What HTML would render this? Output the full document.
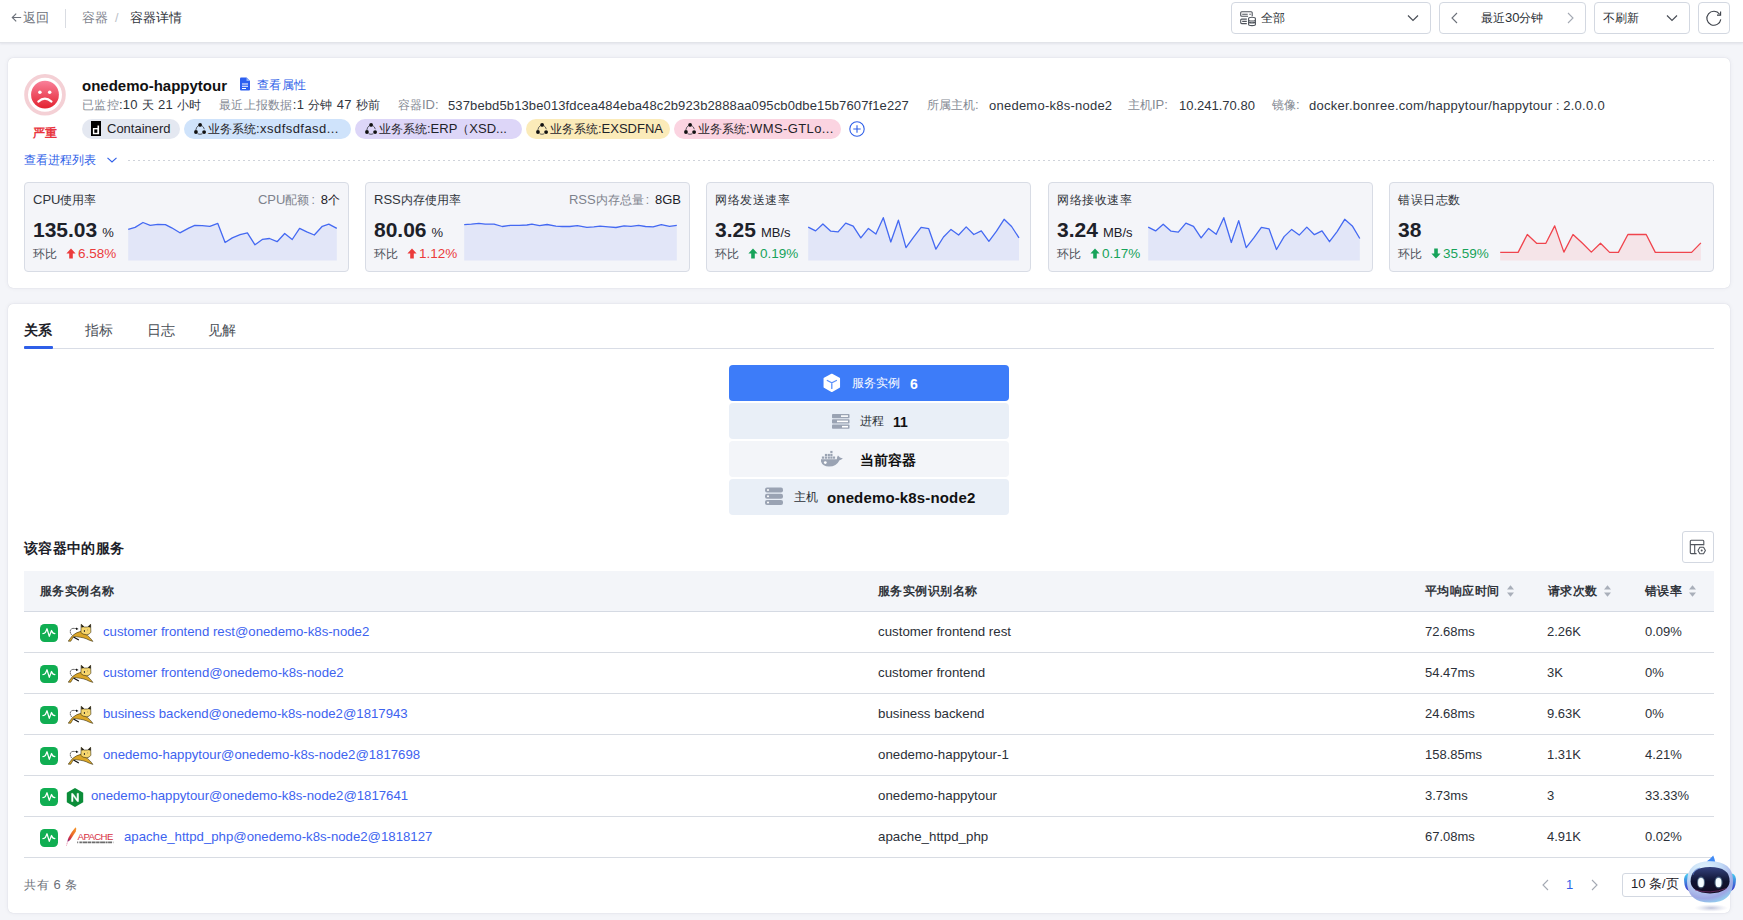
<!DOCTYPE html>
<html><head><meta charset="utf-8">
<style>
*{box-sizing:border-box;margin:0;padding:0}
html,body{width:1743px;height:920px;overflow:hidden}
body{background:#f4f5f9;font-family:"Liberation Sans",sans-serif;color:#1d2129;position:relative;font-size:12px}
.a{position:absolute;white-space:nowrap}
.hdr{position:absolute;left:0;top:0;width:1743px;height:43px;background:#fff;box-shadow:0 1px 2px rgba(20,30,60,.08);border-bottom:1px solid #e2e4e9}
.box{position:absolute;border:1px solid #d3d8e1;border-radius:4px;background:#fff;height:32px;top:2px}
.card{position:absolute;left:8px;width:1722px;background:#fff;border-radius:5px;box-shadow:0 0 1px rgba(30,40,70,.2),0 0 5px rgba(30,40,70,.06)}
.tag{position:absolute;top:119px;height:20px;border-radius:10px;font-size:13px;line-height:20px;color:#1f2329}
.mc{position:absolute;top:182px;width:325px;height:90px;border:1px solid #d8dce5;border-radius:4px;background:#f4f5f9}
</style></head>
<body>
<div class="hdr">
<svg class="a" style="left:11px;top:12px" width="11" height="11" viewBox="0 0 11 11"><path d="M10.2 5.5H1.3M5.2 1.6 1.3 5.5 5.2 9.4" fill="none" stroke="#6b7079" stroke-width="1.15"/></svg>
<div class="a" style="left:23px;top:12px;font-size:12.5px;line-height:12.5px;color:#6b7079">返回</div>
<div class="a" style="left:65px;top:9px;width:1px;height:19px;background:#d9dce2"></div>
<div class="a" style="left:82px;top:12px;font-size:12.5px;line-height:12.5px;color:#7d828c">容器</div>
<div class="a" style="left:115px;top:12px;font-size:12.5px;line-height:12.5px;color:#b9bec7">/</div>
<div class="a" style="left:130px;top:12px;font-size:12.5px;line-height:12.5px;color:#30343b">容器详情</div>
<div class="box" style="left:1231px;width:200px"></div>
<div class="box" style="left:1439px;width:147px"></div>
<div class="box" style="left:1594px;width:96px"></div>
<div class="box" style="left:1698px;width:32px"></div>
<svg class="a" style="left:1240px;top:11px" width="17" height="16" viewBox="0 0 17 16"><g fill="none" stroke="#4f545c" stroke-width="1.1"><path d="M12.2 5.2V1.8Q12.2 .7 11.1 .7H1.7Q.7 .7 .7 1.8V4.2Q.7 5.2 1.7 5.2H8"/><path d="M2.2 3.3H7.7M9.4 3.3H10.8"/><path d="M6.8 8.1H1.7Q.7 8.1 .7 9.1V11.6Q.7 12.6 1.7 12.6H6.8M2.2 10.4H6.8"/><path d="M8.6 7.4Q8.6 6.3 12 6.3T15.4 7.4V13.5Q15.4 14.6 12 14.6T8.6 13.5Z"/><path d="M8.6 9.4Q12 10.6 15.4 9.4M8.6 11.4Q12 12.4 15.4 11.4"/></g></svg>
<div class="a" style="left:1261px;top:12px;font-size:12px;line-height:12px;color:#2b2f36">全部</div>
<svg class="a" style="left:1407px;top:14px" width="12" height="8" viewBox="0 0 12 8"><path d="M1 1.5 6 6.5 11 1.5" fill="none" stroke="#4a4f57" stroke-width="1.2"/></svg>
<svg class="a" style="left:1450px;top:12px" width="9" height="12" viewBox="0 0 9 12"><path d="M7 1 2 6 7 11" fill="none" stroke="#6b7079" stroke-width="1.1"/></svg>
<div class="a" style="left:1481px;top:12px;font-size:12px;line-height:12px;color:#2b2f36">最近<span style="font-size:13px">30</span>分钟</div>
<svg class="a" style="left:1566px;top:12px" width="9" height="12" viewBox="0 0 9 12"><path d="M2 1 7 6 2 11" fill="none" stroke="#a4a9b3" stroke-width="1.1"/></svg>
<div class="a" style="left:1603px;top:12px;font-size:12px;line-height:12px;color:#2b2f36">不刷新</div>
<svg class="a" style="left:1666px;top:14px" width="12" height="8" viewBox="0 0 12 8"><path d="M1 1.5 6 6.5 11 1.5" fill="none" stroke="#4a4f57" stroke-width="1.2"/></svg>
<svg class="a" style="left:1705px;top:10px" width="18" height="17" viewBox="0 0 18 17"><path d="M14.6 4.2A7 7 0 1 0 15.8 9.3" fill="none" stroke="#3a3f47" stroke-width="1.1"/><path d="M15.6 1.5V5.1H12" fill="none" stroke="#3a3f47" stroke-width="1.1"/></svg>
</div>
<div class="card" style="top:58px;height:230px"></div>
<div class="card" style="top:304px;height:609px"></div>
<svg class="a" style="left:23px;top:73px" width="44" height="44" viewBox="0 0 44 44">
 <defs><linearGradient id="rg" x1="0" y1="0" x2="0" y2="1"><stop offset="0" stop-color="#f9809a"/><stop offset="1" stop-color="#e3222f"/></linearGradient></defs>
 <circle cx="22" cy="21.7" r="18.9" fill="#fff" stroke="#f4d0d5" stroke-width="3.8"/>
 <circle cx="22" cy="21.7" r="13.9" fill="url(#rg)"/>
 <circle cx="16.9" cy="19.3" r="1.75" fill="#fff"/><circle cx="26.7" cy="19.3" r="1.75" fill="#fff"/>
 <path d="M15.3 28.6Q21.9 22.6 28.5 28.6" fill="none" stroke="#fff" stroke-width="2.1" stroke-linecap="round"/>
</svg>
<div class="a" style="left:33px;top:127px;font-size:12px;line-height:12px;color:#e8363f;font-weight:bold">严重</div>
<div class="a" style="left:82px;top:78px;font-size:15px;line-height:15px;color:#111;font-weight:bold">onedemo-happytour</div>
<svg class="a" style="left:239px;top:77px" width="12" height="14" viewBox="0 0 12 14"><path d="M1 1.5Q1 .5 2 .5H7.5L11 4V12.5Q11 13.5 10 13.5H2Q1 13.5 1 12.5Z" fill="#2c5ff0"/><path d="M7.5 .5V4H11" fill="#8fb0fa"/><path d="M3 7H9M3 9.3H9M3 11.5H7" stroke="#fff" stroke-width="1.1"/></svg>
<div class="a" style="left:257px;top:79px;font-size:12px;line-height:12px;color:#2f5fe8;letter-spacing:0.3px">查看属性</div>
<div class="a" style="left:82px;top:99px;font-size:12px;line-height:12px;color:#30353d;letter-spacing:0.3px"><span style="color:#858a94">已监控</span><span style="font-size:13px">:10 </span>天<span style="font-size:13px"> 21 </span>小时</div>
<div class="a" style="left:219px;top:99px;font-size:12px;line-height:12px;color:#30353d;letter-spacing:0.3px"><span style="color:#858a94">最近上报数据</span><span style="font-size:13px">:1 </span>分钟<span style="font-size:13px"> 47 </span>秒前</div>
<div class="a" style="left:398px;top:99px;font-size:12px;line-height:12px;color:#858a94">容器<span style="font-size:13px">ID:</span></div>
<div class="a" style="left:448px;top:99px;font-size:13px;line-height:13px;color:#30353d;letter-spacing:0.12px">537bebd5b13be013fdcea484eba48c2b923b2888aa095cb0dbe15b7607f1e227</div>
<div class="a" style="left:927px;top:99px;font-size:12px;line-height:12px;color:#858a94">所属主机<span style="font-size:13px">:</span></div>
<div class="a" style="left:989px;top:99px;font-size:13px;line-height:13px;color:#30353d;letter-spacing:0.24px">onedemo-k8s-node2</div>
<div class="a" style="left:1128px;top:99px;font-size:12px;line-height:12px;color:#858a94">主机<span style="font-size:13px">IP:</span></div>
<div class="a" style="left:1179px;top:99px;font-size:13px;line-height:13px;color:#30353d">10.241.70.80</div>
<div class="a" style="left:1272px;top:99px;font-size:12px;line-height:12px;color:#858a94">镜像<span style="font-size:13px">:</span></div>
<div class="a" style="left:1309px;top:99px;font-size:13px;line-height:13px;color:#30353d;letter-spacing:0.27px">docker.bonree.com/happytour/happytour<span style="font-size:12px"> : </span>2.0.0.0</div>
<div class="tag" style="left:82px;width:98px;background:#e4e8f1;padding-left:25px">Containerd</div>
<svg class="a" style="left:91px;top:121px" width="10" height="15" viewBox="0 0 10 15"><rect width="10" height="15" fill="#000"/><path d="M6.5 4.4H8.1V13.3H1.9V7H6.5Z" fill="#fff"/><rect x="3.3" y="8.4" width="3" height="3.4" fill="#000"/></svg>
<div class="tag" style="left:184px;width:167px;background:#cfe3fb;padding-left:24px;font-size:12px">业务系统<span style="font-size:13px;letter-spacing:0.45px">:xsdfsdfasd...</span></div>
<svg class="a" style="left:194px;top:122px" width="13" height="13" viewBox="0 0 13 13"><g fill="none" stroke="#2a2f37" stroke-width=".85" opacity=".85"><path d="M4.6 3.4Q2.4 4.6 1.8 8"/><path d="M7.8 3.6Q9.6 4.5 10.3 7.2"/><path d="M3.7 11.8Q6 12.8 8.3 11.8"/></g><circle cx="6.1" cy="2.9" r="1.9" fill="#111"/><circle cx="1.95" cy="10" r="1.9" fill="#111"/><circle cx="10.1" cy="10.1" r="1.9" fill="#111"/></svg>
<div class="tag" style="left:355px;width:167px;background:#ddd6f8;padding-left:24px;font-size:12px">业务系统<span style="font-size:13px;letter-spacing:0px">:ERP<span style="font-size:12px">（</span>XSD...</span></div>
<svg class="a" style="left:365px;top:122px" width="13" height="13" viewBox="0 0 13 13"><g fill="none" stroke="#2a2f37" stroke-width=".85" opacity=".85"><path d="M4.6 3.4Q2.4 4.6 1.8 8"/><path d="M7.8 3.6Q9.6 4.5 10.3 7.2"/><path d="M3.7 11.8Q6 12.8 8.3 11.8"/></g><circle cx="6.1" cy="2.9" r="1.9" fill="#111"/><circle cx="1.95" cy="10" r="1.9" fill="#111"/><circle cx="10.1" cy="10.1" r="1.9" fill="#111"/></svg>
<div class="tag" style="left:526px;width:144px;background:#fbebb9;padding-left:24px;font-size:12px">业务系统<span style="font-size:13px;letter-spacing:0px">:EXSDFNA</span></div>
<svg class="a" style="left:536px;top:122px" width="13" height="13" viewBox="0 0 13 13"><g fill="none" stroke="#2a2f37" stroke-width=".85" opacity=".85"><path d="M4.6 3.4Q2.4 4.6 1.8 8"/><path d="M7.8 3.6Q9.6 4.5 10.3 7.2"/><path d="M3.7 11.8Q6 12.8 8.3 11.8"/></g><circle cx="6.1" cy="2.9" r="1.9" fill="#111"/><circle cx="1.95" cy="10" r="1.9" fill="#111"/><circle cx="10.1" cy="10.1" r="1.9" fill="#111"/></svg>
<div class="tag" style="left:674px;width:167px;background:#fbd4e1;padding-left:24px;font-size:12px">业务系统<span style="font-size:13px;letter-spacing:0.4px">:WMS-GTLo...</span></div>
<svg class="a" style="left:684px;top:122px" width="13" height="13" viewBox="0 0 13 13"><g fill="none" stroke="#2a2f37" stroke-width=".85" opacity=".85"><path d="M4.6 3.4Q2.4 4.6 1.8 8"/><path d="M7.8 3.6Q9.6 4.5 10.3 7.2"/><path d="M3.7 11.8Q6 12.8 8.3 11.8"/></g><circle cx="6.1" cy="2.9" r="1.9" fill="#111"/><circle cx="1.95" cy="10" r="1.9" fill="#111"/><circle cx="10.1" cy="10.1" r="1.9" fill="#111"/></svg>
<svg class="a" style="left:849px;top:121px" width="16" height="16" viewBox="0 0 16 16"><circle cx="8" cy="8" r="7.2" fill="none" stroke="#2f5fe8" stroke-width="1.1"/><path d="M8 4.3V11.7M4.3 8H11.7" stroke="#2f5fe8" stroke-width="1.1"/></svg>
<div class="a" style="left:24px;top:154px;font-size:12px;line-height:12px;color:#2f5fe8">查看进程列表</div>
<svg class="a" style="left:106px;top:155px" width="12" height="10" viewBox="0 0 12 10"><path d="M1.5 2.8 6 7 10.5 2.8" fill="none" stroke="#2f5fe8" stroke-width="1.1"/></svg>
<div class="a" style="left:128px;top:160px;width:1586px;height:1px;background:repeating-linear-gradient(90deg,#cfd3da 0 2px,transparent 2px 5px)"></div>
<div class="mc" style="left:24px"></div>
<div class="a" style="left:33px;top:194px;font-size:12px;line-height:12px;color:#30343b"><span style="font-size:13px">CPU</span>使用率</div>
<div class="a" style="left:32px;top:194px;font-size:12px;line-height:12px;color:#7d828c;left:auto;right:1403px"><span style="font-size:13px">CPU</span>配额<span style="margin:0 6px 0 2px">:</span><span style="color:#1d2129"><span style="font-size:13px">8</span>个</span></div>
<div class="a" style="left:33px;top:219px;font-size:21px;line-height:21px;color:#1d2129;font-weight:bold">135.03<span style="font-size:13px;font-weight:normal;margin-left:5px">%</span></div>
<div class="a" style="left:33px;top:248px;font-size:12px;line-height:12px;color:#4a4f57">环比</div>
<svg class="a" style="left:66px;top:248px" width="10" height="11" viewBox="0 0 10 11"><path d="M3.2 10.5H6.8V5.4H9.6L5 .4.4 5.4H3.2Z" fill="#eb3b3b"/></svg>
<div class="a" style="left:78px;top:247px;font-size:13.5px;line-height:13.5px;color:#eb3b3b">6.58%</div>
<div class="mc" style="left:365px"></div>
<div class="a" style="left:374px;top:194px;font-size:12px;line-height:12px;color:#30343b"><span style="font-size:13px">RSS</span>内存使用率</div>
<div class="a" style="left:373px;top:194px;font-size:12px;line-height:12px;color:#7d828c;left:auto;right:1062px"><span style="font-size:13px">RSS</span>内存总量<span style="margin:0 6px 0 2px">:</span><span style="color:#1d2129"><span style="font-size:13px">8</span><span style="font-size:13px">GB</span></span></div>
<div class="a" style="left:374px;top:219px;font-size:21px;line-height:21px;color:#1d2129;font-weight:bold">80.06<span style="font-size:13px;font-weight:normal;margin-left:5px">%</span></div>
<div class="a" style="left:374px;top:248px;font-size:12px;line-height:12px;color:#4a4f57">环比</div>
<svg class="a" style="left:407px;top:248px" width="10" height="11" viewBox="0 0 10 11"><path d="M3.2 10.5H6.8V5.4H9.6L5 .4.4 5.4H3.2Z" fill="#eb3b3b"/></svg>
<div class="a" style="left:419px;top:247px;font-size:13.5px;line-height:13.5px;color:#eb3b3b">1.12%</div>
<div class="mc" style="left:706px"></div>
<div class="a" style="left:715px;top:194px;font-size:12px;line-height:12px;color:#30343b;letter-spacing:0.6px">网络发送速率</div>
<div class="a" style="left:715px;top:219px;font-size:21px;line-height:21px;color:#1d2129;font-weight:bold">3.25<span style="font-size:13px;font-weight:normal;margin-left:5px">MB/s</span></div>
<div class="a" style="left:715px;top:248px;font-size:12px;line-height:12px;color:#4a4f57">环比</div>
<svg class="a" style="left:748px;top:248px" width="10" height="11" viewBox="0 0 10 11"><path d="M3.2 10.5H6.8V5.4H9.6L5 .4.4 5.4H3.2Z" fill="#17a35a"/></svg>
<div class="a" style="left:760px;top:247px;font-size:13.5px;line-height:13.5px;color:#17a35a">0.19%</div>
<div class="mc" style="left:1048px"></div>
<div class="a" style="left:1057px;top:194px;font-size:12px;line-height:12px;color:#30343b;letter-spacing:0.6px">网络接收速率</div>
<div class="a" style="left:1057px;top:219px;font-size:21px;line-height:21px;color:#1d2129;font-weight:bold">3.24<span style="font-size:13px;font-weight:normal;margin-left:5px">MB/s</span></div>
<div class="a" style="left:1057px;top:248px;font-size:12px;line-height:12px;color:#4a4f57">环比</div>
<svg class="a" style="left:1090px;top:248px" width="10" height="11" viewBox="0 0 10 11"><path d="M3.2 10.5H6.8V5.4H9.6L5 .4.4 5.4H3.2Z" fill="#17a35a"/></svg>
<div class="a" style="left:1102px;top:247px;font-size:13.5px;line-height:13.5px;color:#17a35a">0.17%</div>
<div class="mc" style="left:1389px"></div>
<div class="a" style="left:1398px;top:194px;font-size:12px;line-height:12px;color:#30343b;letter-spacing:0.6px">错误日志数</div>
<div class="a" style="left:1398px;top:219px;font-size:21px;line-height:21px;color:#1d2129;font-weight:bold">38</div>
<div class="a" style="left:1398px;top:248px;font-size:12px;line-height:12px;color:#4a4f57">环比</div>
<svg class="a" style="left:1431px;top:248px" width="10" height="11" viewBox="0 0 10 11"><path d="M3.2 .5H6.8V5.6H9.6L5 10.6.4 5.6H3.2Z" fill="#17a35a"/></svg>
<div class="a" style="left:1443px;top:247px;font-size:13.5px;line-height:13.5px;color:#17a35a">35.59%</div>
<svg class="a" style="left:0;top:0" width="1743" height="300" viewBox="0 0 1743 300">
<path d="M128.2 229.4 L135.1 227.4 L143.0 222.5 L150.2 225.3 L157.8 224.4 L165.4 224.6 L171.7 227.8 L179.9 232.8 L188.7 228.2 L194.8 225.3 L202.2 225.6 L209.8 226.3 L217.8 223.4 L225.1 242.5 L232.3 237.9 L240.1 234.7 L247.4 232.8 L255.0 244.8 L262.3 239.4 L269.5 238.5 L277.1 241.7 L284.7 233.5 L292.2 239.5 L299.6 228.4 L306.8 231.9 L314.3 235.0 L322.3 226.3 L328.8 224.2 L336.8 228.4 L336.8 260.6 L128.2 260.6 Z" fill="#e2e6f8"/><path d="M128.2 229.4 L135.1 227.4 L143.0 222.5 L150.2 225.3 L157.8 224.4 L165.4 224.6 L171.7 227.8 L179.9 232.8 L188.7 228.2 L194.8 225.3 L202.2 225.6 L209.8 226.3 L217.8 223.4 L225.1 242.5 L232.3 237.9 L240.1 234.7 L247.4 232.8 L255.0 244.8 L262.3 239.4 L269.5 238.5 L277.1 241.7 L284.7 233.5 L292.2 239.5 L299.6 228.4 L306.8 231.9 L314.3 235.0 L322.3 226.3 L328.8 224.2 L336.8 228.4" fill="none" stroke="#4469f2" stroke-width="1.3" stroke-linejoin="round"/>
<path d="M464.2 224.6 L471.4 224.2 L478.9 223.4 L485.2 224.1 L494.1 224.1 L502.3 226.5 L510.5 225.4 L519.3 225.4 L526.9 225.0 L531.9 224.1 L539.5 225.6 L547.1 224.5 L555.9 226.1 L562.2 226.5 L569.8 226.5 L577.4 225.6 L586.9 227.4 L593.8 226.9 L600.1 226.1 L608.3 226.9 L615.9 227.5 L624.1 225.9 L631.0 226.3 L638.6 225.3 L645.5 226.5 L653.1 226.9 L661.3 224.6 L669.5 226.3 L676.8 225.3 L676.8 260.6 L464.2 260.6 Z" fill="#e2e6f8"/><path d="M464.2 224.6 L471.4 224.2 L478.9 223.4 L485.2 224.1 L494.1 224.1 L502.3 226.5 L510.5 225.4 L519.3 225.4 L526.9 225.0 L531.9 224.1 L539.5 225.6 L547.1 224.5 L555.9 226.1 L562.2 226.5 L569.8 226.5 L577.4 225.6 L586.9 227.4 L593.8 226.9 L600.1 226.1 L608.3 226.9 L615.9 227.5 L624.1 225.9 L631.0 226.3 L638.6 225.3 L645.5 226.5 L653.1 226.9 L661.3 224.6 L669.5 226.3 L676.8 225.3" fill="none" stroke="#4469f2" stroke-width="1.3" stroke-linejoin="round"/>
<path d="M808.2 227.1 L815.6 230.9 L822.9 224.0 L830.8 231.2 L838.1 231.9 L845.7 223.1 L853.2 226.1 L860.8 237.9 L868.4 228.4 L875.9 234.1 L883.3 217.7 L890.8 242.0 L898.4 220.2 L906.0 247.6 L913.6 237.2 L921.1 227.4 L928.7 228.7 L935.9 249.2 L943.5 237.0 L951.0 229.4 L958.6 235.0 L966.2 226.9 L973.8 234.5 L981.3 230.9 L988.9 241.3 L996.5 231.2 L1004.1 219.3 L1011.6 226.5 L1019.0 237.9 L1019.0 260.6 L808.2 260.6 Z" fill="#e2e6f8"/><path d="M808.2 227.1 L815.6 230.9 L822.9 224.0 L830.8 231.2 L838.1 231.9 L845.7 223.1 L853.2 226.1 L860.8 237.9 L868.4 228.4 L875.9 234.1 L883.3 217.7 L890.8 242.0 L898.4 220.2 L906.0 247.6 L913.6 237.2 L921.1 227.4 L928.7 228.7 L935.9 249.2 L943.5 237.0 L951.0 229.4 L958.6 235.0 L966.2 226.9 L973.8 234.5 L981.3 230.9 L988.9 241.3 L996.5 231.2 L1004.1 219.3 L1011.6 226.5 L1019.0 237.9" fill="none" stroke="#4469f2" stroke-width="1.3" stroke-linejoin="round"/>
<path d="M1148.2 227.1 L1155.6 230.9 L1163.2 224.2 L1171.1 231.2 L1178.3 232.2 L1185.9 223.1 L1193.5 226.3 L1201.1 237.9 L1208.6 228.4 L1216.2 234.3 L1223.8 217.7 L1231.3 242.5 L1238.7 220.6 L1246.2 247.7 L1253.8 237.9 L1261.4 227.4 L1269.0 228.8 L1276.5 249.5 L1284.1 236.6 L1291.7 229.4 L1299.2 235.1 L1306.8 227.1 L1314.4 234.7 L1322.0 230.9 L1329.5 241.7 L1337.1 231.6 L1344.7 219.3 L1352.3 225.9 L1359.8 238.5 L1359.8 260.6 L1148.2 260.6 Z" fill="#e2e6f8"/><path d="M1148.2 227.1 L1155.6 230.9 L1163.2 224.2 L1171.1 231.2 L1178.3 232.2 L1185.9 223.1 L1193.5 226.3 L1201.1 237.9 L1208.6 228.4 L1216.2 234.3 L1223.8 217.7 L1231.3 242.5 L1238.7 220.6 L1246.2 247.7 L1253.8 237.9 L1261.4 227.4 L1269.0 228.8 L1276.5 249.5 L1284.1 236.6 L1291.7 229.4 L1299.2 235.1 L1306.8 227.1 L1314.4 234.7 L1322.0 230.9 L1329.5 241.7 L1337.1 231.6 L1344.7 219.3 L1352.3 225.9 L1359.8 238.5" fill="none" stroke="#4469f2" stroke-width="1.3" stroke-linejoin="round"/>
<path d="M1500.2 252.4 L1518.1 252.4 L1527.3 234.5 L1536.6 243.3 L1545.9 243.3 L1554.7 225.9 L1563.9 252.1 L1573.0 234.5 L1582.5 243.3 L1591.3 252.1 L1600.5 243.3 L1609.6 252.4 L1618.4 252.4 L1627.9 234.5 L1646.2 234.5 L1655.3 252.4 L1691.6 252.4 L1700.9 242.9 L1700.9 260.6 L1500.2 260.6 Z" fill="#f5e4e8"/><path d="M1500.2 252.4 L1518.1 252.4 L1527.3 234.5 L1536.6 243.3 L1545.9 243.3 L1554.7 225.9 L1563.9 252.1 L1573.0 234.5 L1582.5 243.3 L1591.3 252.1 L1600.5 243.3 L1609.6 252.4 L1618.4 252.4 L1627.9 234.5 L1646.2 234.5 L1655.3 252.4 L1691.6 252.4 L1700.9 242.9" fill="none" stroke="#f0444d" stroke-width="1.3" stroke-linejoin="round"/>
</svg><div class="a" style="left:24px;top:323px;font-size:14px;line-height:14px;color:#1d2129;font-weight:bold">关系</div>
<div class="a" style="left:85px;top:323px;font-size:14px;line-height:14px;color:#4a4f57">指标</div>
<div class="a" style="left:147px;top:323px;font-size:14px;line-height:14px;color:#4a4f57">日志</div>
<div class="a" style="left:208px;top:323px;font-size:14px;line-height:14px;color:#4a4f57">见解</div>
<div class="a" style="left:24px;top:348px;width:1690px;height:1px;background:#d9dde6"></div>
<div class="a" style="left:24px;top:346px;width:29px;height:3px;background:#2f5fe8;border-radius:1px"></div>
<div class="a" style="left:729px;top:365px;width:280px;height:36px;background:#3d7cf9;border-radius:4px"></div>
<div class="a" style="left:729px;top:403px;width:280px;height:36px;background:#e9eff7;border-radius:4px"></div>
<div class="a" style="left:729px;top:441px;width:280px;height:36px;background:#f3f5f9;border-radius:4px"></div>
<div class="a" style="left:729px;top:479px;width:280px;height:36px;background:#e9eff7;border-radius:4px"></div>
<svg class="a" style="left:823px;top:373px" width="18" height="20" viewBox="0 0 18 20"><path d="M8.8 1.5 16.2 5.6V14.1L8.8 18.2 1.4 14.1V5.6Z" fill="#fff" stroke="#fff" stroke-linejoin="round" stroke-width="1.7"/><path d="M4.3 7.5 8.8 9.8 13.4 7.5M8.8 9.8V15.4" fill="none" stroke="#3d7cf9" stroke-width="1.3" stroke-linecap="round" opacity=".85"/></svg>
<div class="a" style="left:852px;top:377px;font-size:12px;line-height:12px;color:#fff">服务实例</div>
<div class="a" style="left:910px;top:377px;font-size:14px;line-height:14px;color:#fff;font-weight:bold">6</div>
<svg class="a" style="left:832px;top:414px" width="18" height="15" viewBox="0 0 18 15"><g fill="#9aa3b3"><rect x="0" y="0" width="17.5" height="4.2" rx=".8"/><rect x="0" y="5.3" width="17.5" height="4.2" rx=".8"/><rect x="0" y="10.6" width="17.5" height="4.2" rx=".8"/></g><g fill="#fff"><rect x="9" y="1.3" width="7" height="1.6"/><rect x="5" y="6.6" width="11" height="1.6"/><rect x="10" y="11.9" width="6" height="1.6"/></g></svg>
<div class="a" style="left:860px;top:415px;font-size:12px;line-height:12px;color:#2b2f36">进程</div>
<div class="a" style="left:893px;top:415px;font-size:14px;line-height:14px;color:#111;font-weight:bold">11</div>
<svg class="a" style="left:820px;top:450px" width="24" height="18" viewBox="0 0 24 18"><g fill="#9aa3b3"><path d="M1 9.3H16.8Q17 6.5 18 5.4Q19.5 7.6 22.9 8.5Q20.6 10 19.5 10.3Q16.5 16.6 9 16.6Q2.6 16.6 1 11.5Z"/><rect x="10.3" y="0.9" width="2.2" height="2.2"/><rect x="4.9" y="3.9" width="2.2" height="2.2"/><rect x="7.7" y="3.9" width="2.2" height="2.2"/><rect x="10.3" y="3.9" width="2.2" height="2.2"/><rect x="1.9" y="6.5" width="2.2" height="2.2"/><rect x="4.8" y="6.5" width="2.2" height="2.2"/><rect x="7.7" y="6.5" width="2.2" height="2.2"/><rect x="10.3" y="6.5" width="2.2" height="2.2"/><rect x="12.9" y="6.5" width="2.2" height="2.2"/></g><circle cx="5.3" cy="12.6" r="1.4" fill="#fff"/></svg>
<div class="a" style="left:860px;top:453px;font-size:14px;line-height:14px;color:#111;font-weight:bold">当前容器</div>
<svg class="a" style="left:765px;top:487px" width="19" height="19" viewBox="0 0 19 19"><g fill="#9aa3b3"><rect x="0" y=".5" width="18" height="5" rx="2"/><rect x="0" y="6.8" width="18" height="5" rx="2"/><rect x="0" y="13.1" width="18" height="5" rx="2"/></g><g fill="#fff"><circle cx="3" cy="3" r="1"/><circle cx="3" cy="9.3" r="1"/><circle cx="3" cy="15.6" r="1"/></g></svg>
<div class="a" style="left:794px;top:491px;font-size:12px;line-height:12px;color:#2b2f36">主机</div>
<div class="a" style="left:827px;top:490px;font-size:15px;line-height:15px;color:#111;font-weight:bold;letter-spacing:0.15px">onedemo-k8s-node2</div>
<div class="a" style="left:24px;top:541px;font-size:14px;line-height:14px;color:#1d2129;font-weight:bold;letter-spacing:0.35px">该容器中的服务</div>
<div class="a" style="left:1682px;top:531px;width:32px;height:32px;border:1px solid #d3d8e1;border-radius:3px;background:#fff"></div>
<svg class="a" style="left:1689px;top:539px" width="18" height="17" viewBox="0 0 18 17"><g fill="none" stroke="#4f545c" stroke-width="1.1" stroke-linejoin="round"><path d="M14.8 6.2V2.2Q14.8 1.2 13.8 1.2H2.3Q1.3 1.2 1.3 2.2V13.6Q1.3 14.6 2.3 14.6H7.6"/><path d="M1.3 5.6H14.8M5.7 5.6V14.6"/><path d="M16.4 11.5 14.55 14.7H10.85L9 11.5 10.85 8.3H14.55Z"/></g><circle cx="12.7" cy="11.5" r="1" fill="#4f545c"/></svg>
<div class="a" style="left:24px;top:571px;width:1690px;height:41px;background:#f3f5f9;border-bottom:1px solid #d5dae3"></div>
<div class="a" style="left:40px;top:585px;font-size:12px;line-height:12px;color:#30343b;font-weight:bold;letter-spacing:0.45px">服务实例名称</div>
<div class="a" style="left:878px;top:585px;font-size:12px;line-height:12px;color:#30343b;font-weight:bold;letter-spacing:0.45px">服务实例识别名称</div>
<div class="a" style="left:1425px;top:585px;font-size:12px;line-height:12px;color:#30343b;font-weight:bold;letter-spacing:0.45px">平均响应时间</div>
<div class="a" style="left:1548px;top:585px;font-size:12px;line-height:12px;color:#30343b;font-weight:bold;letter-spacing:0.45px">请求次数</div>
<div class="a" style="left:1645px;top:585px;font-size:12px;line-height:12px;color:#30343b;font-weight:bold;letter-spacing:0.45px">错误率</div>
<svg class="a" style="left:1506px;top:584px" width="9" height="14" viewBox="0 0 9 14"><path d="M4.5 1.2 8 5.6H1Z M4.5 12.8 8 8.4H1Z" fill="#a9afba"/></svg>
<svg class="a" style="left:1603px;top:584px" width="9" height="14" viewBox="0 0 9 14"><path d="M4.5 1.2 8 5.6H1Z M4.5 12.8 8 8.4H1Z" fill="#a9afba"/></svg>
<svg class="a" style="left:1688px;top:584px" width="9" height="14" viewBox="0 0 9 14"><path d="M4.5 1.2 8 5.6H1Z M4.5 12.8 8 8.4H1Z" fill="#a9afba"/></svg>
<div class="a" style="left:24px;top:652px;width:1690px;height:1px;background:#d8dce3"></div>
<svg class="a" style="left:40px;top:624px" width="18" height="18" viewBox="0 0 18 18"><rect width="18" height="18" rx="4.5" fill="#10ae52"/><path d="M2.9 9.6Q4.6 9.6 5.4 8.4L7 4.7 9.3 12.4 11.5 6.5Q12.4 9.6 14.9 9.6" fill="none" stroke="#fff" stroke-width="1.25" stroke-linejoin="round" stroke-linecap="round"/></svg>
<svg class="a" style="left:68px;top:623px" width="26" height="20" viewBox="0 0 26 20"><path d="M3.7 11.9Q1.6 9.5 2.6 6.8Q3.5 5.2 6 5.4L8.6 5.6" fill="none" stroke="#222" stroke-width=".8" stroke-dasharray="1.4 .5"/><path d="M8 4.6 10.6 6 8 6.9Z" fill="#111"/><path d="M5.9 14.3 10.4 16.8" stroke="#111" stroke-width="1.3" stroke-linecap="round"/><path d="M.2 18.2 4.5 12.5Q8 9.5 13.3 8.1L19.5 12.4Q22.5 15 24.9 18.4Q21 17.3 18.3 15.8Q15 14.5 12.4 14.3Q8 13.5 5.5 13.6L2.8 18.2Z" fill="#dba628" stroke="#2a2206" stroke-width=".55"/><path d="M12.9 9.5 13.2 1.2 16.3 4H19.8L22.6 1.2 22.9 9.2Q21.5 11.8 18.3 11.8Q14.5 11.5 12.9 9.5Z" fill="#f6d66e" stroke="#2a2206" stroke-width=".55"/><path d="M13.2 1.2 16.3 4 13.4 4.6ZM22.6 1.2 19.8 4 22.8 4.5Z" fill="#1a1a1a"/><ellipse cx="16.4" cy="7.9" rx=".6" ry="1" fill="#222"/><circle cx="19.7" cy="6.9" r=".45" fill="#444"/></svg>
<div class="a" style="left:103px;top:625px;font-size:13.2px;line-height:13.2px;color:#3d63ef">customer frontend rest@onedemo-k8s-node2</div>
<div class="a" style="left:878px;top:625px;font-size:13.3px;line-height:13.3px;color:#2b3038">customer frontend rest</div>
<div class="a" style="left:1425px;top:625px;font-size:13px;line-height:13px;color:#2b3038">72.68ms</div>
<div class="a" style="left:1547px;top:625px;font-size:13px;line-height:13px;color:#2b3038">2.26K</div>
<div class="a" style="left:1645px;top:625px;font-size:13px;line-height:13px;color:#2b3038">0.09%</div>
<div class="a" style="left:24px;top:693px;width:1690px;height:1px;background:#d8dce3"></div>
<svg class="a" style="left:40px;top:665px" width="18" height="18" viewBox="0 0 18 18"><rect width="18" height="18" rx="4.5" fill="#10ae52"/><path d="M2.9 9.6Q4.6 9.6 5.4 8.4L7 4.7 9.3 12.4 11.5 6.5Q12.4 9.6 14.9 9.6" fill="none" stroke="#fff" stroke-width="1.25" stroke-linejoin="round" stroke-linecap="round"/></svg>
<svg class="a" style="left:68px;top:664px" width="26" height="20" viewBox="0 0 26 20"><path d="M3.7 11.9Q1.6 9.5 2.6 6.8Q3.5 5.2 6 5.4L8.6 5.6" fill="none" stroke="#222" stroke-width=".8" stroke-dasharray="1.4 .5"/><path d="M8 4.6 10.6 6 8 6.9Z" fill="#111"/><path d="M5.9 14.3 10.4 16.8" stroke="#111" stroke-width="1.3" stroke-linecap="round"/><path d="M.2 18.2 4.5 12.5Q8 9.5 13.3 8.1L19.5 12.4Q22.5 15 24.9 18.4Q21 17.3 18.3 15.8Q15 14.5 12.4 14.3Q8 13.5 5.5 13.6L2.8 18.2Z" fill="#dba628" stroke="#2a2206" stroke-width=".55"/><path d="M12.9 9.5 13.2 1.2 16.3 4H19.8L22.6 1.2 22.9 9.2Q21.5 11.8 18.3 11.8Q14.5 11.5 12.9 9.5Z" fill="#f6d66e" stroke="#2a2206" stroke-width=".55"/><path d="M13.2 1.2 16.3 4 13.4 4.6ZM22.6 1.2 19.8 4 22.8 4.5Z" fill="#1a1a1a"/><ellipse cx="16.4" cy="7.9" rx=".6" ry="1" fill="#222"/><circle cx="19.7" cy="6.9" r=".45" fill="#444"/></svg>
<div class="a" style="left:103px;top:666px;font-size:13.2px;line-height:13.2px;color:#3d63ef">customer frontend@onedemo-k8s-node2</div>
<div class="a" style="left:878px;top:666px;font-size:13.3px;line-height:13.3px;color:#2b3038">customer frontend</div>
<div class="a" style="left:1425px;top:666px;font-size:13px;line-height:13px;color:#2b3038">54.47ms</div>
<div class="a" style="left:1547px;top:666px;font-size:13px;line-height:13px;color:#2b3038">3K</div>
<div class="a" style="left:1645px;top:666px;font-size:13px;line-height:13px;color:#2b3038">0%</div>
<div class="a" style="left:24px;top:734px;width:1690px;height:1px;background:#d8dce3"></div>
<svg class="a" style="left:40px;top:706px" width="18" height="18" viewBox="0 0 18 18"><rect width="18" height="18" rx="4.5" fill="#10ae52"/><path d="M2.9 9.6Q4.6 9.6 5.4 8.4L7 4.7 9.3 12.4 11.5 6.5Q12.4 9.6 14.9 9.6" fill="none" stroke="#fff" stroke-width="1.25" stroke-linejoin="round" stroke-linecap="round"/></svg>
<svg class="a" style="left:68px;top:705px" width="26" height="20" viewBox="0 0 26 20"><path d="M3.7 11.9Q1.6 9.5 2.6 6.8Q3.5 5.2 6 5.4L8.6 5.6" fill="none" stroke="#222" stroke-width=".8" stroke-dasharray="1.4 .5"/><path d="M8 4.6 10.6 6 8 6.9Z" fill="#111"/><path d="M5.9 14.3 10.4 16.8" stroke="#111" stroke-width="1.3" stroke-linecap="round"/><path d="M.2 18.2 4.5 12.5Q8 9.5 13.3 8.1L19.5 12.4Q22.5 15 24.9 18.4Q21 17.3 18.3 15.8Q15 14.5 12.4 14.3Q8 13.5 5.5 13.6L2.8 18.2Z" fill="#dba628" stroke="#2a2206" stroke-width=".55"/><path d="M12.9 9.5 13.2 1.2 16.3 4H19.8L22.6 1.2 22.9 9.2Q21.5 11.8 18.3 11.8Q14.5 11.5 12.9 9.5Z" fill="#f6d66e" stroke="#2a2206" stroke-width=".55"/><path d="M13.2 1.2 16.3 4 13.4 4.6ZM22.6 1.2 19.8 4 22.8 4.5Z" fill="#1a1a1a"/><ellipse cx="16.4" cy="7.9" rx=".6" ry="1" fill="#222"/><circle cx="19.7" cy="6.9" r=".45" fill="#444"/></svg>
<div class="a" style="left:103px;top:707px;font-size:13.2px;line-height:13.2px;color:#3d63ef">business backend@onedemo-k8s-node2@1817943</div>
<div class="a" style="left:878px;top:707px;font-size:13.3px;line-height:13.3px;color:#2b3038">business backend</div>
<div class="a" style="left:1425px;top:707px;font-size:13px;line-height:13px;color:#2b3038">24.68ms</div>
<div class="a" style="left:1547px;top:707px;font-size:13px;line-height:13px;color:#2b3038">9.63K</div>
<div class="a" style="left:1645px;top:707px;font-size:13px;line-height:13px;color:#2b3038">0%</div>
<div class="a" style="left:24px;top:775px;width:1690px;height:1px;background:#d8dce3"></div>
<svg class="a" style="left:40px;top:747px" width="18" height="18" viewBox="0 0 18 18"><rect width="18" height="18" rx="4.5" fill="#10ae52"/><path d="M2.9 9.6Q4.6 9.6 5.4 8.4L7 4.7 9.3 12.4 11.5 6.5Q12.4 9.6 14.9 9.6" fill="none" stroke="#fff" stroke-width="1.25" stroke-linejoin="round" stroke-linecap="round"/></svg>
<svg class="a" style="left:68px;top:746px" width="26" height="20" viewBox="0 0 26 20"><path d="M3.7 11.9Q1.6 9.5 2.6 6.8Q3.5 5.2 6 5.4L8.6 5.6" fill="none" stroke="#222" stroke-width=".8" stroke-dasharray="1.4 .5"/><path d="M8 4.6 10.6 6 8 6.9Z" fill="#111"/><path d="M5.9 14.3 10.4 16.8" stroke="#111" stroke-width="1.3" stroke-linecap="round"/><path d="M.2 18.2 4.5 12.5Q8 9.5 13.3 8.1L19.5 12.4Q22.5 15 24.9 18.4Q21 17.3 18.3 15.8Q15 14.5 12.4 14.3Q8 13.5 5.5 13.6L2.8 18.2Z" fill="#dba628" stroke="#2a2206" stroke-width=".55"/><path d="M12.9 9.5 13.2 1.2 16.3 4H19.8L22.6 1.2 22.9 9.2Q21.5 11.8 18.3 11.8Q14.5 11.5 12.9 9.5Z" fill="#f6d66e" stroke="#2a2206" stroke-width=".55"/><path d="M13.2 1.2 16.3 4 13.4 4.6ZM22.6 1.2 19.8 4 22.8 4.5Z" fill="#1a1a1a"/><ellipse cx="16.4" cy="7.9" rx=".6" ry="1" fill="#222"/><circle cx="19.7" cy="6.9" r=".45" fill="#444"/></svg>
<div class="a" style="left:103px;top:748px;font-size:13.2px;line-height:13.2px;color:#3d63ef">onedemo-happytour@onedemo-k8s-node2@1817698</div>
<div class="a" style="left:878px;top:748px;font-size:13.3px;line-height:13.3px;color:#2b3038">onedemo-happytour-1</div>
<div class="a" style="left:1425px;top:748px;font-size:13px;line-height:13px;color:#2b3038">158.85ms</div>
<div class="a" style="left:1547px;top:748px;font-size:13px;line-height:13px;color:#2b3038">1.31K</div>
<div class="a" style="left:1645px;top:748px;font-size:13px;line-height:13px;color:#2b3038">4.21%</div>
<div class="a" style="left:24px;top:816px;width:1690px;height:1px;background:#d8dce3"></div>
<svg class="a" style="left:40px;top:788px" width="18" height="18" viewBox="0 0 18 18"><rect width="18" height="18" rx="4.5" fill="#10ae52"/><path d="M2.9 9.6Q4.6 9.6 5.4 8.4L7 4.7 9.3 12.4 11.5 6.5Q12.4 9.6 14.9 9.6" fill="none" stroke="#fff" stroke-width="1.25" stroke-linejoin="round" stroke-linecap="round"/></svg>
<svg class="a" style="left:66px;top:788px" width="18" height="19" viewBox="0 0 18 19"><path d="M9 0 17.2 4.7V14.3L9 19 .8 14.3V4.7Z" fill="#0b8d39"/><path d="M5.6 13.6V5.4H6.9L11.1 11.2V5.4H12.5V13.6H11.2L7 7.8V13.6Z" fill="#fff" stroke="#fff" stroke-width=".5"/></svg>
<div class="a" style="left:91px;top:789px;font-size:13.2px;line-height:13.2px;color:#3d63ef">onedemo-happytour@onedemo-k8s-node2@1817641</div>
<div class="a" style="left:878px;top:789px;font-size:13.3px;line-height:13.3px;color:#2b3038">onedemo-happytour</div>
<div class="a" style="left:1425px;top:789px;font-size:13px;line-height:13px;color:#2b3038">3.73ms</div>
<div class="a" style="left:1547px;top:789px;font-size:13px;line-height:13px;color:#2b3038">3</div>
<div class="a" style="left:1645px;top:789px;font-size:13px;line-height:13px;color:#2b3038">33.33%</div>
<div class="a" style="left:24px;top:857px;width:1690px;height:1px;background:#d8dce3"></div>
<svg class="a" style="left:40px;top:829px" width="18" height="18" viewBox="0 0 18 18"><rect width="18" height="18" rx="4.5" fill="#10ae52"/><path d="M2.9 9.6Q4.6 9.6 5.4 8.4L7 4.7 9.3 12.4 11.5 6.5Q12.4 9.6 14.9 9.6" fill="none" stroke="#fff" stroke-width="1.25" stroke-linejoin="round" stroke-linecap="round"/></svg>
<svg class="a" style="left:66px;top:827px" width="49" height="20" viewBox="0 0 49 20"><defs><linearGradient id="fe" x1="1" y1="0" x2="0" y2="1"><stop offset="0" stop-color="#f79a2a"/><stop offset=".5" stop-color="#ea6a26"/><stop offset=".8" stop-color="#c8284e"/><stop offset="1" stop-color="#6a2a8a"/></linearGradient></defs><path d="M9.6.3Q10.9 1.2 9.8 4.5L4.6 12.4Q3 14.3 1.5 14.8Q1.5 13 2.5 10.8Q6 4 9.6.3Z" fill="url(#fe)"/><path d="M1.6 14.6.4 18.8" stroke="#e0507a" stroke-width=".6" stroke-dasharray="1 .6"/><text x="11.6" y="12.9" font-family="Liberation Sans" font-size="9.6" fill="#d63042" letter-spacing="-.6">APACHE</text><path d="M11.2 15.4H47.4" stroke="#2e2e2e" stroke-width="1.9" stroke-dasharray="1 1.2 2.5 .6 5 .5 3 .6 4 .5 3.5 .5 5 .5 2 .5 4" opacity=".7"/></svg>
<div class="a" style="left:124px;top:830px;font-size:13.2px;line-height:13.2px;color:#3d63ef">apache_httpd_php@onedemo-k8s-node2@1818127</div>
<div class="a" style="left:878px;top:830px;font-size:13.3px;line-height:13.3px;color:#2b3038">apache_httpd_php</div>
<div class="a" style="left:1425px;top:830px;font-size:13px;line-height:13px;color:#2b3038">67.08ms</div>
<div class="a" style="left:1547px;top:830px;font-size:13px;line-height:13px;color:#2b3038">4.91K</div>
<div class="a" style="left:1645px;top:830px;font-size:13px;line-height:13px;color:#2b3038">0.02%</div>
<div class="a" style="left:24px;top:879px;font-size:12px;line-height:12px;color:#6b7079;letter-spacing:0.6px">共有<span style="font-size:13px"> 6 </span>条</div>
<svg class="a" style="left:1541px;top:879px" width="9" height="12" viewBox="0 0 9 12"><path d="M7 1 2 6 7 11" fill="none" stroke="#a4a9b3" stroke-width="1.1"/></svg>
<div class="a" style="left:1566px;top:878px;font-size:13px;line-height:13px;color:#2f5fe8">1</div>
<svg class="a" style="left:1590px;top:879px" width="9" height="12" viewBox="0 0 9 12"><path d="M2 1 7 6 2 11" fill="none" stroke="#a4a9b3" stroke-width="1.1"/></svg>
<div class="a" style="left:1622px;top:873px;width:90px;height:24px;border:1px solid #d3d8e1;border-radius:3px;background:#fff"></div>
<div class="a" style="left:1631px;top:878px;font-size:12.5px;line-height:12.5px;color:#1d2129"><span style="font-size:13px">10 </span>条/页</div>
<svg class="a" style="left:1680px;top:853px" width="60" height="62" viewBox="0 0 60 62">
<defs>
<radialGradient id="hd" cx=".38" cy=".22" r=".85"><stop offset="0" stop-color="#e4f6fd"/><stop offset=".45" stop-color="#c3dbf6"/><stop offset=".8" stop-color="#9ea6e3"/><stop offset="1" stop-color="#8fd8f2"/></radialGradient>
<linearGradient id="vs" x1="0" y1="0" x2="0" y2="1"><stop offset="0" stop-color="#34427e"/><stop offset=".55" stop-color="#0f1330"/><stop offset="1" stop-color="#140c22"/></linearGradient>
<linearGradient id="er" x1="0" y1="0" x2="0" y2="1"><stop offset="0" stop-color="#45d0f2"/><stop offset="1" stop-color="#3a2fc8"/></linearGradient>
<radialGradient id="sh" cx=".5" cy=".5" r=".5"><stop offset="0" stop-color="#a4aacb" stop-opacity=".7"/><stop offset="1" stop-color="#c9cde0" stop-opacity="0"/></radialGradient>
<radialGradient id="ey" cx=".5" cy=".5" r=".5"><stop offset=".55" stop-color="#ffffff"/><stop offset="1" stop-color="#7fdcff" stop-opacity="0"/></radialGradient>
</defs>
<ellipse cx="31" cy="55" rx="17" ry="3.8" fill="url(#sh)"/>
<path d="M4.2 29Q3.2 22 8 20.5L9 38Q4.6 36 4.2 29Z" fill="url(#er)"/>
<path d="M55.8 29Q56.8 22 52 20.5L51 38Q55.4 36 55.8 29Z" fill="url(#er)"/>
<path d="M26.5 8.5Q30.5 6 33.2 2.6Q34.5 5.5 35.2 9Z" fill="#3f8af5"/>
<path d="M30 8.2Q52.5 8.2 53 27Q53.5 44 40 48.2Q30 50.8 20 48.2Q6.8 44 7 28Q7.5 8.2 30 8.2Z" fill="url(#hd)"/>
<path d="M30 14Q50 14 49.6 28.5Q49 39.5 30 40.5Q11 39.5 10.6 28.5Q10.2 14 30 14Z" fill="url(#vs)"/>
<path d="M13 22Q14 16.5 20 15.2" fill="none" stroke="#5a7fd0" stroke-width="1.2" opacity=".6"/>
<path d="M15 37Q30 41.5 46.5 35.5" fill="none" stroke="#8a3a7a" stroke-width="1" opacity=".6"/>
<rect x="16.5" y="23" width="9" height="13" rx="4.5" fill="url(#ey)" opacity=".8"/><rect x="34" y="23" width="9" height="13" rx="4.5" fill="url(#ey)" opacity=".8"/>
<rect x="18.4" y="25" width="5.2" height="9" rx="2.6" fill="#f4fcff"/><rect x="35.9" y="25" width="5.2" height="9" rx="2.6" fill="#f4fcff"/>
</svg>
</body></html>
